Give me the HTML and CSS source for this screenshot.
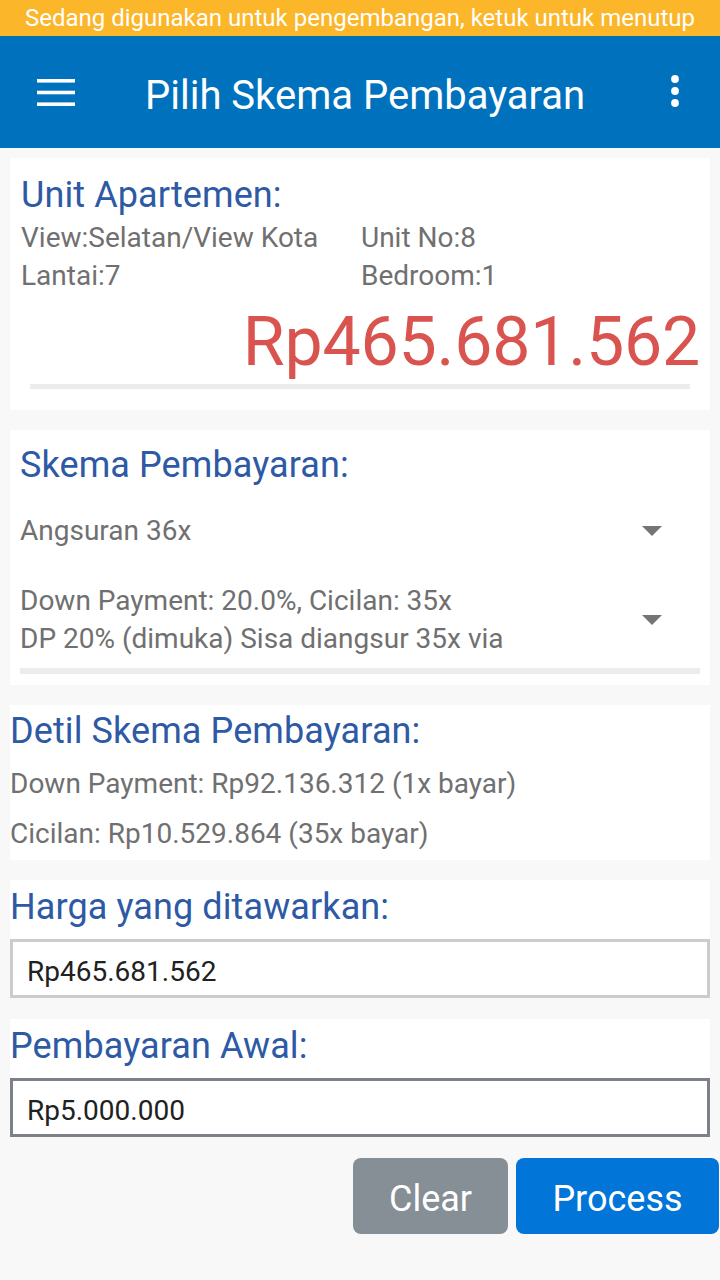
FILE: index.html
```html
<!DOCTYPE html>
<html lang="id">
<head>
<meta charset="utf-8">
<title>Pilih Skema Pembayaran</title>
<link rel="stylesheet" href="styles.css">
</head>
<body>
<div class="banner">Sedang digunakan untuk pengembangan, ketuk untuk menutup</div>
<header class="appbar">
  <svg class="menu-icon" width="38" height="27" viewBox="0 0 38 27" aria-hidden="true">
    <rect x="0" y="0" width="38" height="3.6" fill="#fff"/>
    <rect x="0" y="11.7" width="38" height="3.6" fill="#fff"/>
    <rect x="0" y="23.4" width="38" height="3.6" fill="#fff"/>
  </svg>
  <h1 class="title">Pilih Skema Pembayaran</h1>
  <svg class="more-icon" width="10" height="32" viewBox="0 0 10 32" aria-hidden="true">
    <circle cx="5" cy="4" r="3.9" fill="#fff"/>
    <circle cx="5" cy="16" r="3.9" fill="#fff"/>
    <circle cx="5" cy="28" r="3.9" fill="#fff"/>
  </svg>
</header>
<main class="content">
  <section class="card unit">
    <h2 class="heading">Unit Apartemen:</h2>
    <div class="info-grid">
      <span>View:Selatan/View Kota</span>
      <span>Unit No:8</span>
      <span>Lantai:7</span>
      <span>Bedroom:1</span>
    </div>
    <div class="price">Rp465.681.562</div>
    <div class="divider unit-divider"></div>
  </section>

  <section class="card skema">
    <h2 class="heading">Skema Pembayaran:</h2>
    <div class="spinner spinner-one">
      <span class="spinner-text">Angsuran 36x</span>
      <svg class="caret" width="20" height="10" viewBox="0 0 20 10" aria-hidden="true"><polygon points="0,0 20,0 10,10" fill="#757575"/></svg>
    </div>
    <div class="spinner spinner-two">
      <span class="spinner-text">Down Payment: 20.0%, Cicilan: 35x<br>DP 20% (dimuka) Sisa diangsur 35x via</span>
      <svg class="caret" width="20" height="10" viewBox="0 0 20 10" aria-hidden="true"><polygon points="0,0 20,0 10,10" fill="#757575"/></svg>
    </div>
    <div class="divider skema-divider"></div>
  </section>

  <section class="card detil">
    <h2 class="heading">Detil Skema Pembayaran:</h2>
    <p class="detail-line first">Down Payment: Rp92.136.312 (1x bayar)</p>
    <p class="detail-line">Cicilan: Rp10.529.864 (35x bayar)</p>
  </section>

  <section class="card field">
    <h2 class="heading">Harga yang ditawarkan:</h2>
    <input class="text-input" type="text" value="Rp465.681.562">
  </section>

  <section class="card field">
    <h2 class="heading">Pembayaran Awal:</h2>
    <input class="text-input focused" type="text" value="Rp5.000.000">
  </section>

  <div class="actions">
    <button class="btn btn-clear" type="button">Clear</button>
    <button class="btn btn-process" type="button">Process</button>
  </div>
</main>
</body>
</html>
```

FILE: styles.css
```css
* { box-sizing: border-box; }

html, body {
  margin: 0;
  padding: 0;
}

body {
  width: 720px;
  min-height: 1280px;
  background: #f8f8f8;
  font-family: Roboto, "Noto Sans", "Liberation Sans", sans-serif;
  color: #707070;
}

.banner {
  height: 36px;
  background: #fbb62a;
  color: #ffffff;
  font-size: 24px;
  line-height: 36px;
  text-align: center;
  white-space: nowrap;
}

.appbar {
  height: 112px;
  background: #0071bc;
  display: flex;
  align-items: center;
  padding-left: 37px;
  color: #fff;
}

.menu-icon {
  flex: none;
  margin-top: 1px;
}

.title {
  margin: 8px 0 0 70px;
  font-size: 40px;
  font-weight: 400;
  line-height: 48px;
  white-space: nowrap;
  flex: 1;
}

.more-icon {
  flex: none;
  margin-right: 40px;
  margin-top: -2px;
}

.content {
  display: flex;
  flex-direction: column;
  gap: 20px;
  padding: 10px 10px 0 10px;
}

.card {
  background: #ffffff;
}

.heading {
  margin: 0;
  font-size: 36px;
  font-weight: 400;
  line-height: 44px;
  color: #2d59a5;
  white-space: nowrap;
  letter-spacing: 0.1px;
}

/* Unit card */
.unit {
  padding: 15px 11px 21px 11px;
}

.info-grid {
  margin-top: 2px;
  display: grid;
  grid-template-columns: 340px 1fr;
  font-size: 28px;
  line-height: 38px;
  color: #707070;
  white-space: nowrap;
}

.price {
  margin-top: 7px;
  margin-right: -1px;
  font-size: 68px;
  line-height: 80px;
  color: #d9534f;
  text-align: right;
  letter-spacing: -0.2px;
}

.divider {
  height: 5px;
  background: #ececec;
}

.unit-divider {
  margin: 2px 9px 0 9px;
}

/* Skema card */
.skema {
  padding: 13px 10px 11px 10px;
}

.spinner {
  display: flex;
  align-items: center;
  justify-content: space-between;
  padding-right: 38px;
  font-size: 28px;
  line-height: 38px;
  color: #707070;
  white-space: nowrap;
}

.spinner-one {
  height: 88px;
}

.spinner-two {
  height: 90px;
}

.skema-divider {
  height: 6px;
  margin-top: 3px;
}

/* Detail card */
.detil {
  padding: 4px 0 0 0;
  height: 155px;
}

.detail-line {
  margin: 0;
  font-size: 28px;
  line-height: 50px;
  color: #707070;
  white-space: nowrap;
}

.detail-line.first {
  margin-top: 6px;
}

/* Field cards */
.field {
  padding-top: 5px;
  display: flex;
  flex-direction: column;
}

.field + .field {
  margin-top: 1px;
}

.field .heading {
  margin-bottom: 10px;
}

.text-input {
  display: block;
  width: 700px;
  height: 59px;
  margin: 0;
  border: 3px solid #cccccc;
  border-radius: 0;
  padding: 5px 0 0 14px;
  font-family: Roboto, "Noto Sans", "Liberation Sans", sans-serif;
  font-size: 28px;
  color: #212121;
  background: #ffffff;
  outline: none;
}

.text-input.focused {
  border-color: #7c8187;
}

/* Actions */
.actions {
  margin-top: 1px;
  display: flex;
  justify-content: flex-end;
  gap: 8px;
  margin-right: -9px;
}

.btn {
  height: 76px;
  border: none;
  border-radius: 8px;
  color: #ffffff;
  font-family: Roboto, "Noto Sans", "Liberation Sans", sans-serif;
  font-size: 36px;
  padding: 5px 0 0 0;
}

.btn-clear {
  width: 155px;
  background: #868e96;
}

.btn-process {
  width: 203px;
  background: #0275d8;
}
```
